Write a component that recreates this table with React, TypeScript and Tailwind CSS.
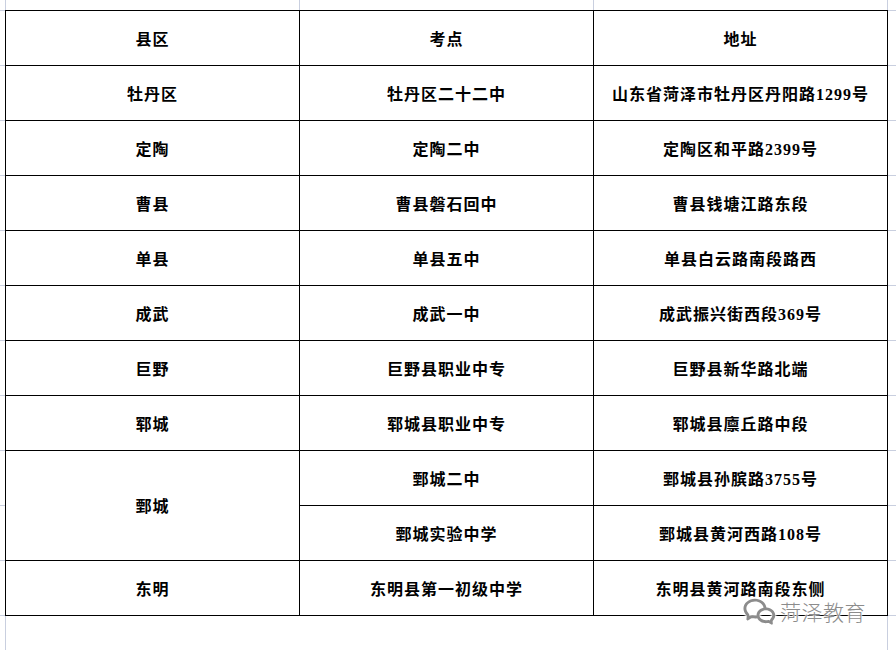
import { RiWechatLine } from "react-icons/ri"

type Row = {
  county?: string
  span?: boolean
  site: string
  addr: string
}

const rows: Row[] = [
  { county: "牡丹区", site: "牡丹区二十二中", addr: "山东省菏泽市牡丹区丹阳路1299号" },
  { county: "定陶", site: "定陶二中", addr: "定陶区和平路2399号" },
  { county: "曹县", site: "曹县磐石回中", addr: "曹县钱塘江路东段" },
  { county: "单县", site: "单县五中", addr: "单县白云路南段路西" },
  { county: "成武", site: "成武一中", addr: "成武振兴街西段369号" },
  { county: "巨野", site: "巨野县职业中专", addr: "巨野县新华路北端" },
  { county: "郓城", site: "郓城县职业中专", addr: "郓城县廪丘路中段" },
  { county: "鄄城", span: true, site: "鄄城二中", addr: "鄄城县孙膑路3755号" },
  { site: "鄄城实验中学", addr: "鄄城县黄河西路108号" },
  { county: "东明", site: "东明县第一初级中学", addr: "东明县黄河路南段东侧" },
]

function Cell({ children, className = "" }: { children: React.ReactNode; className?: string }) {
  return (
    <div className={`bg-white flex items-center justify-center pt-[3px] text-[16px] tracking-[1px] font-bold text-black ${className}`}>
      {children}
    </div>
  )
}

function Stubs() {
  return (
    <div className="flex flex-col">
      {Array.from({ length: 11 }).map((_, i) => (
        <div key={i}>
          <div className="h-px bg-[#c9cfdf]" />
          <div className="h-[54px]" />
        </div>
      ))}
      <div className="h-px bg-[#c9cfdf]" />
    </div>
  )
}

export default function App() {
  return (
    <div
      className="relative w-[896px] h-[650px] bg-white overflow-hidden flex flex-col"
      style={{ fontFamily: '"Liberation Serif", "Noto Sans CJK SC", serif' }}
    >
      {/* top margin marks */}
      <div className="h-[10px] flex shrink-0">
        <div className="w-[5px]" />
        <div className="w-px bg-[#c9cfdf]" />
        <div className="w-[293px]" />
        <div className="w-px bg-[#c9cfdf]" />
        <div className="w-[293px]" />
        <div className="w-px bg-[#c9cfdf]" />
        <div className="w-[293px]" />
        <div className="w-px bg-[#c9cfdf]" />
      </div>

      <div className="flex shrink-0">
        <div className="w-[5px]">
          <Stubs />
        </div>

        {/* table */}
        <div className="grid grid-cols-[293px_293px_293px] auto-rows-[54px] gap-px p-px bg-black">
          <Cell>县区</Cell>
          <Cell>考点</Cell>
          <Cell>地址</Cell>
          {rows.map((r, i) => (
            <div key={i} className="contents">
              {r.county && <Cell className={r.span ? "row-span-2" : ""}>{r.county}</Cell>}
              <Cell>{r.site}</Cell>
              <Cell>{r.addr}</Cell>
            </div>
          ))}
        </div>

        <div className="flex-1">
          <Stubs />
        </div>
      </div>

      {/* bottom margin marks */}
      <div className="flex-1 flex">
        <div className="w-[5px]" />
        <div className="w-px bg-[#c9cfdf]" />
        <div className="w-[881px]" />
        <div className="w-px bg-[#c9cfdf]" />
      </div>

      {/* watermark */}
      <div className="absolute left-[742px] top-[594px] flex items-center gap-[3px] text-[#8c8c8c]">
        <RiWechatLine size={35} className="[filter:drop-shadow(0_0_1px_#fff)_drop-shadow(0_0_1px_#fff)]" />
        <span
          className="text-[21px] font-light leading-none tracking-[0.5px] [text-shadow:0_0_2px_#fff,0_0_2px_#fff,0_0_1px_#fff]"
          style={{ fontFamily: '"Noto Sans CJK SC", sans-serif' }}
        >
          菏泽教育
        </span>
      </div>
    </div>
  )
}
